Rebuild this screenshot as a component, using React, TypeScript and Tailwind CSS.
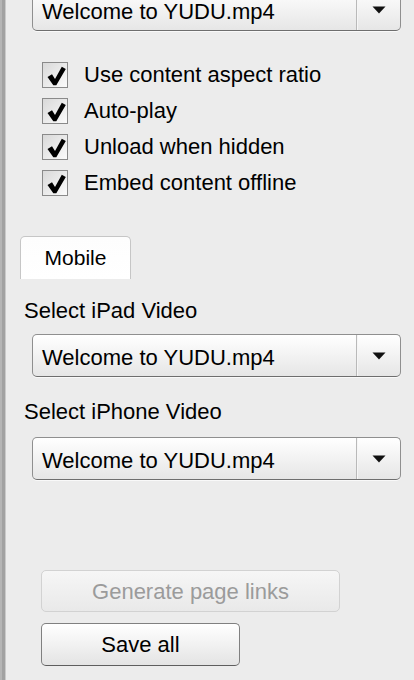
import React from 'react'

const font = { fontFamily: '"Liberation Sans", Arial, Helvetica, sans-serif' }

function Select({ value }: { value: string }) {
  return (
    <div className="flex h-[43px] w-[369px] items-stretch rounded-[5px] border border-[#8f8f8f] border-b-[#6e6e6e] bg-gradient-to-b from-[#ffffff] to-[#e6e6e6] shadow-[0_1px_0_rgba(255,255,255,0.7)]">
      <div className="flex flex-1 items-center pl-[9px] pt-[5px] text-[22px] leading-none text-black">{value}</div>
      <div className="w-px bg-[#b9b9b9]" />
      <div className="w-px bg-[#f6f6f6]" />
      <div className="flex w-[42px] items-center justify-center">
        <svg width="14" height="8" viewBox="0 0 14 8">
          <path d="M0.5 0.5 H13.5 L7 7.5 Z" fill="#111" />
        </svg>
      </div>
    </div>
  )
}

function Checkbox({ label }: { label: string }) {
  return (
    <div className="flex h-[36px] items-center gap-[16px]">
      <div className="relative h-[26px] w-[26px] border border-[#8a8a8a] bg-gradient-to-br from-[#d9d9d9] to-[#fbfbfb]">
        <svg className="absolute left-[3px] top-[3px]" width="20" height="20" viewBox="0 0 20 20">
          <path d="M1.5 11 L6 8.3 L9 13 L15.8 0.8 L19.8 3 L10.3 19.2 L7.3 19.2 Z" fill="#000" />
        </svg>
      </div>
      <span className="text-[22px] leading-none text-black">{label}</span>
    </div>
  )
}

export default function App() {
  return (
    <div className="flex h-[680px] w-[414px] overflow-hidden bg-[#ececec]" style={font}>
      {/* panel edge */}
      <div className="w-[2px] bg-[#b5b5b5]" />
      <div className="w-[3px] bg-[#a2a2a2]" />
      <div className="w-[1px] bg-[#cacaca]" />

      <div className="flex flex-1 flex-col">
        <div className="-mt-[12px] pl-[26px]">
          <Select value="Welcome to YUDU.mp4" />
        </div>

        <div className="mt-[26px] flex flex-col pl-[36px]">
          <Checkbox label="Use content aspect ratio" />
          <Checkbox label="Auto-play" />
          <Checkbox label="Unload when hidden" />
          <Checkbox label="Embed content offline" />
        </div>

        {/* tab */}
        <div className="mt-[35px] pl-[14px]">
          <div className="flex h-[43px] w-[111px] items-center justify-center rounded-t-[5px] border border-b-0 border-[#c6c6c6] bg-gradient-to-b from-[#fdfdfd] to-[#ffffff] text-[21px] text-black">
            Mobile
          </div>
        </div>

        <div className="mt-[19px] pl-[18px] text-[22px] leading-[26px] text-black">Select iPad Video</div>
        <div className="mt-[10px] pl-[26px]">
          <Select value="Welcome to YUDU.mp4" />
        </div>

        <div className="mt-[22px] pl-[18px] text-[22px] leading-[26px] text-black">Select iPhone Video</div>
        <div className="mt-[12px] pl-[26px]">
          <Select value="Welcome to YUDU.mp4" />
        </div>

        <div className="mt-[90px] flex flex-col gap-[11px] pl-[35px]">
          <button className="flex h-[42px] w-[299px] items-center justify-center rounded-[5px] border border-[#d2d2d2] bg-gradient-to-b from-[#f6f6f6] to-[#e9e9e9] text-[22px] text-[#9b9b9b]">
            Generate page links
          </button>
          <button className="flex h-[43px] w-[199px] items-center justify-center rounded-[5px] border border-[#808080] border-b-[#5e5e5e] bg-gradient-to-b from-[#ffffff] to-[#e4e4e4] text-[22px] text-black">
            Save all
          </button>
        </div>
      </div>
    </div>
  )
}
